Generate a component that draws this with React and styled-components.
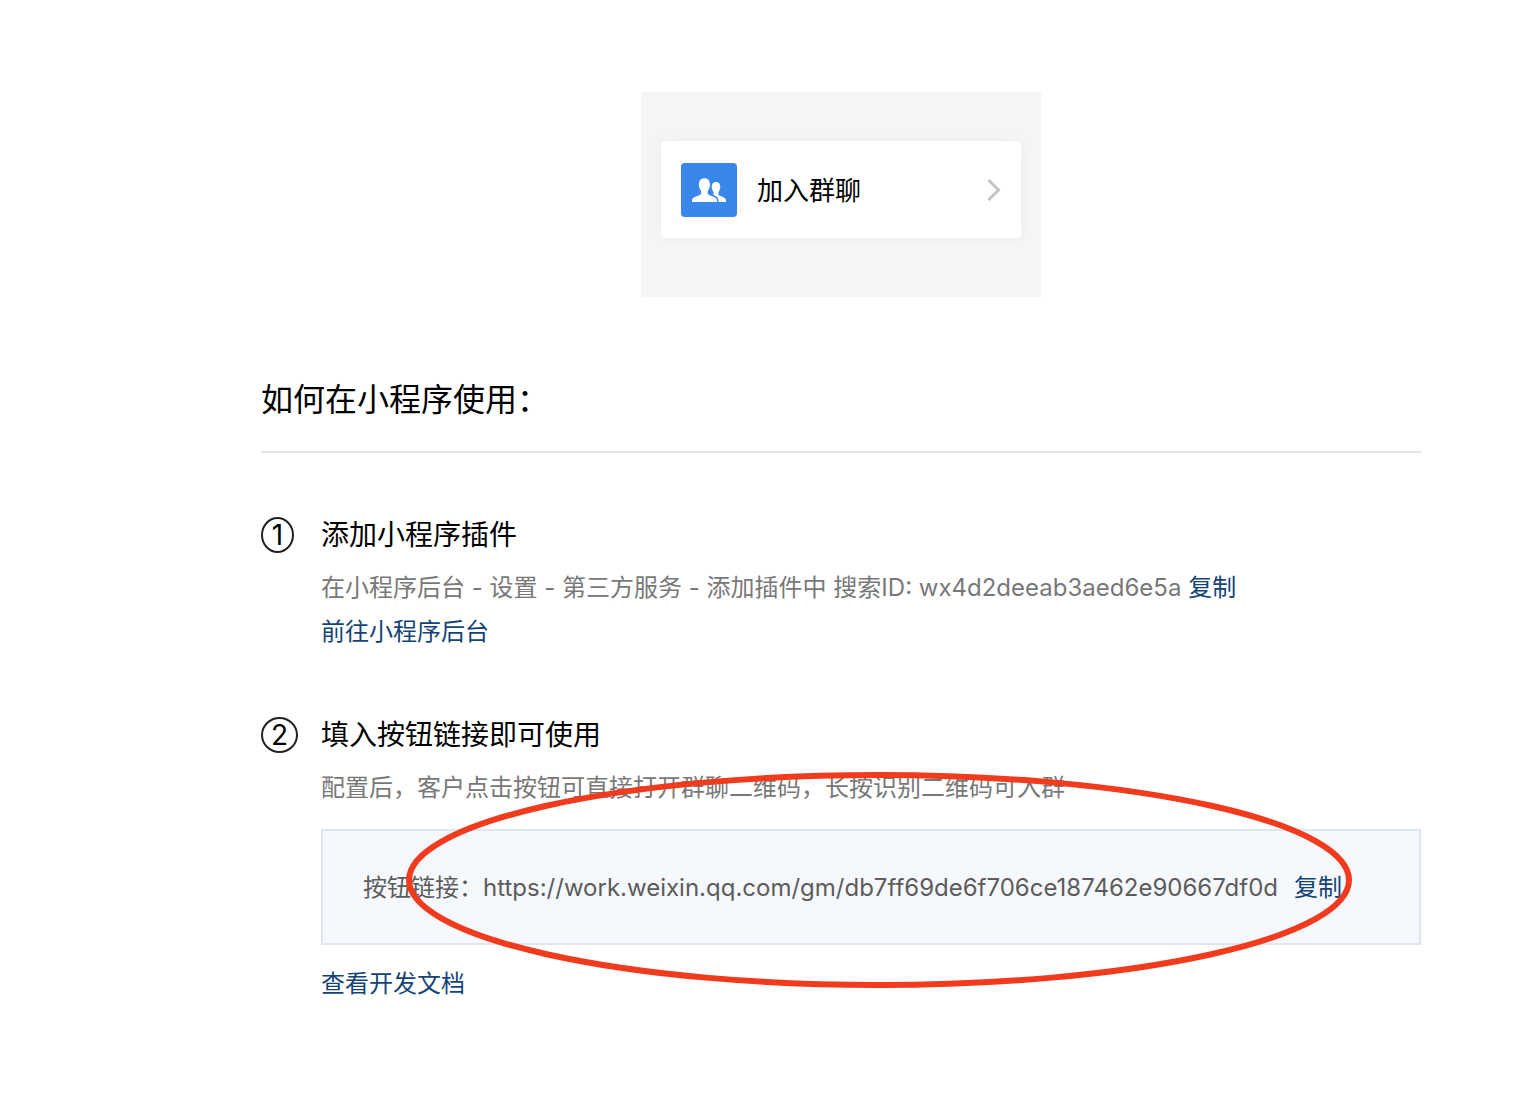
import React from "react";
import styled, { createGlobalStyle } from "styled-components";

const GlobalStyle = createGlobalStyle`
  * { box-sizing: border-box; }
  body {
    margin: 0;
    background: #fff;
    color: #000;
    font-family: Inter, "Noto Sans CJK SC", sans-serif;
    font-size: 24px;
    line-height: 44px;
  }
`;

const Page = styled.main`
  padding: 92px 103px 92px 261px;
`;

const Preview = styled.section`
  width: 400px;
  max-width: 100%;
  margin: 0 auto;
  padding: 49px 20px 59px;
  background: #f5f5f5;
`;

const JoinCard = styled.button`
  display: flex;
  align-items: center;
  gap: 20px;
  width: 100%;
  height: 97px;
  padding: 0 20px;
  border: 0;
  border-radius: 4px;
  background: #fff;
  box-shadow: 0 0 12px rgba(0, 0, 0, 0.04);
  color: #000;
  font: inherit;
  font-size: 26px;
  text-align: left;
  cursor: pointer;
`;

const GroupIcon = styled.svg`
  flex: none;
  width: 56px;
  height: 54px;
  border-radius: 4px;
  background: #3987e9;
`;

const JoinLabel = styled.span`
  flex: 1;
  padding-top: 2px;
`;

const Chevron = styled.svg`
  flex: none;
  width: 14px;
  height: 24px;
`;

const Heading = styled.h1`
  margin: 81px 0 0;
  padding-bottom: 29px;
  border-bottom: 2px solid #e1e3e9;
  font-size: 32px;
  font-weight: 400;
  line-height: 44px;
`;

const Steps = styled.ol`
  display: flex;
  flex-direction: column;
  gap: 61px;
  margin: 62px 0 0;
  padding: 0;
  list-style: none;
`;

const Step = styled.li`
  display: grid;
  grid-template-columns: 60px minmax(0, 1fr);
`;

const StepNumber = styled.span`
  width: ${({ $width }) => $width}px;
  height: 36px;
  margin-top: 2px;
  border: 2px solid #222;
  border-radius: 50%;
  font-size: 28px;
  line-height: 32px;
  text-align: center;
`;

const StepTitle = styled.h2`
  margin: 0 0 11px;
  font-size: 28px;
  font-weight: 400;
  line-height: 40px;
`;

const Description = styled.p`
  margin: 0;
  color: #787878;
`;

const CopyButton = styled.button`
  padding: 0;
  border: 0;
  background: none;
  color: #144477;
  font: inherit;
  cursor: pointer;
`;

const TextLink = styled.a`
  color: #144477;
  text-decoration: none;
`;

const LinkBox = styled.div`
  position: relative;
  display: flex;
  align-items: center;
  gap: 16px;
  height: 116px;
  margin: 19px 0 17px;
  padding: 2px 40px 0;
  border: 2px solid #dfe6ef;
  background: #f5f8fd;
  color: #5c5c5c;
  white-space: nowrap;
`;

const Marker = styled.svg`
  position: absolute;
  left: 83px;
  top: -59px;
  width: 946px;
  height: 216px;
  pointer-events: none;
`;

export default function App() {
  return (
    <>
      <GlobalStyle />
      <Page>
        <Preview>
          <JoinCard type="button">
            <GroupIcon viewBox="0 0 56 54" aria-hidden="true">
              <g fill="#fff">
                <path d="M11 39v-1.600c0-2 1.500-2.900 4-3.800 2.600-1 4.500-1.600 5-2.800.4-1 .2-2.700-.5-3.800-1.200-1.700-1.600-3.400-1.600-5.600 0-4 2.100-6.200 5.500-6.200s5.500 2.200 5.500 6.200c0 2.200-.4 3.900-1.600 5.600-.7 1.100-.9 2.800-.5 3.800.5 1.200 2.400 1.800 5 2.800 2.500.9 4.200 1.800 4.200 3.800V39z" />
                <path d="M37.500 39v-1.800c0-2.300-1.400-3.500-3.600-4.500-.9-.4-1.600-.7-1.900-1.100.8-.7.900-2.200.2-3.200-1-1.400-1.500-2.700-1.500-4.400 0-3.100 1.600-4.900 4.300-4.900s4.300 1.800 4.300 4.900c0 1.700-.5 3-1.400 4.400-1 1.600-.7 3.400.5 4.100 3 1.500 6.600 2.100 6.600 5.100V39z" />
              </g>
            </GroupIcon>
            <JoinLabel>加入群聊</JoinLabel>
            <Chevron viewBox="0 0 14 24" aria-hidden="true">
              <path d="M1.500 2 11.500 12 1.500 22" fill="none" stroke="#c3c3c8" strokeWidth="3" />
            </Chevron>
          </JoinCard>
        </Preview>

        <Heading>如何在小程序使用：</Heading>

        <Steps>
          <Step>
            <StepNumber $width={33}>1</StepNumber>
            <div>
              <StepTitle>添加小程序插件</StepTitle>
              <Description>
                在小程序后台 - 设置 - 第三方服务 - 添加插件中 搜索ID: wx4d2deeab3aed6e5a{" "}
                <CopyButton type="button">复制</CopyButton>
              </Description>
              <TextLink href="#console">前往小程序后台</TextLink>
            </div>
          </Step>
          <Step>
            <StepNumber $width={37}>2</StepNumber>
            <div>
              <StepTitle>填入按钮链接即可使用</StepTitle>
              <Description>配置后，客户点击按钮可直接打开群聊二维码，长按识别二维码可入群</Description>
              <LinkBox>
                <span>按钮链接：https://work.weixin.qq.com/gm/db7ff69de6f706ce187462e90667df0d</span>
                <CopyButton type="button">复制</CopyButton>
                <Marker viewBox="0 0 946 216" aria-hidden="true">
                  <ellipse cx="473" cy="108" rx="470" ry="105" fill="none" stroke="#f23a1d" strokeWidth="6" />
                </Marker>
              </LinkBox>
              <TextLink href="#docs">查看开发文档</TextLink>
            </div>
          </Step>
        </Steps>
      </Page>
    </>
  );
}
